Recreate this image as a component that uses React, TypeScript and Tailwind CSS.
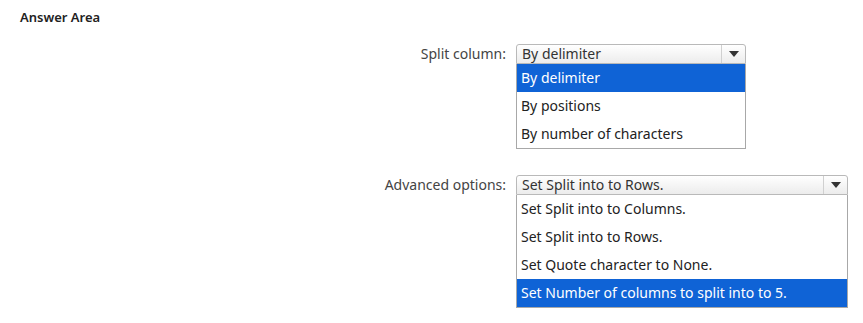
import React from "react";

function Arrow() {
  return (
    <svg width="10" height="6" viewBox="0 0 10 6">
      <path d="M0 0 L10 0 L5 6 Z" fill="#333" />
    </svg>
  );
}

function Select({
  value,
  options,
  selected,
  width,
}: {
  value: string;
  options: string[];
  selected: number;
  width: string;
}) {
  return (
    <div className={`flex flex-col ${width}`}>
      <div className="flex h-[20px] rounded-t-[3px] border border-[#b9b9b9] bg-gradient-to-b from-[#ffffff] to-[#ececec]">
        <div className="flex-1 pl-[5px] text-[14px] leading-[20px] text-[#333] -mt-[1px]">{value}</div>
        <div className="flex w-[24px] items-center justify-center border-l border-[#d0d0d0]">
          <Arrow />
        </div>
      </div>
      <div className="flex flex-col border border-t-0 border-[#a8a8a8] bg-white">
        {options.map((o, i) => (
          <div
            key={o}
            className={`h-[28px] pl-[4px] text-[14px] leading-[28px] ${
              i === selected ? "bg-[#0f63d6] text-white" : "text-[#222]"
            }`}
          >
            {o}
          </div>
        ))}
      </div>
    </div>
  );
}

export default function App() {
  return (
    <div
      className="h-[323px] w-[863px] bg-white text-[#222]"
      style={{ fontFamily: '"Segoe UI", "Noto Sans", sans-serif' }}
    >
      <div className="pl-[20px] pt-[8px] text-[13px] font-semibold leading-[18px] text-[#222]">Answer Area</div>
      <div className="mt-[18px] grid grid-cols-[506px_auto] gap-x-[10px]">
        <div className="text-right text-[14px] leading-[20px] text-[#444]">Split column:</div>
        <Select
          value="By delimiter"
          options={["By delimiter", "By positions", "By number of characters"]}
          selected={0}
          width="w-[230px]"
        />
        <div className="mt-[26px] text-right text-[14px] leading-[20px] text-[#444]">Advanced options:</div>
        <div className="mt-[26px]">
          <Select
            value="Set Split into to Rows."
            options={[
              "Set Split into to Columns.",
              "Set Split into to Rows.",
              "Set Quote character to None.",
              "Set Number of columns to split into to 5.",
            ]}
            selected={3}
            width="w-[332px]"
          />
        </div>
      </div>
    </div>
  );
}
